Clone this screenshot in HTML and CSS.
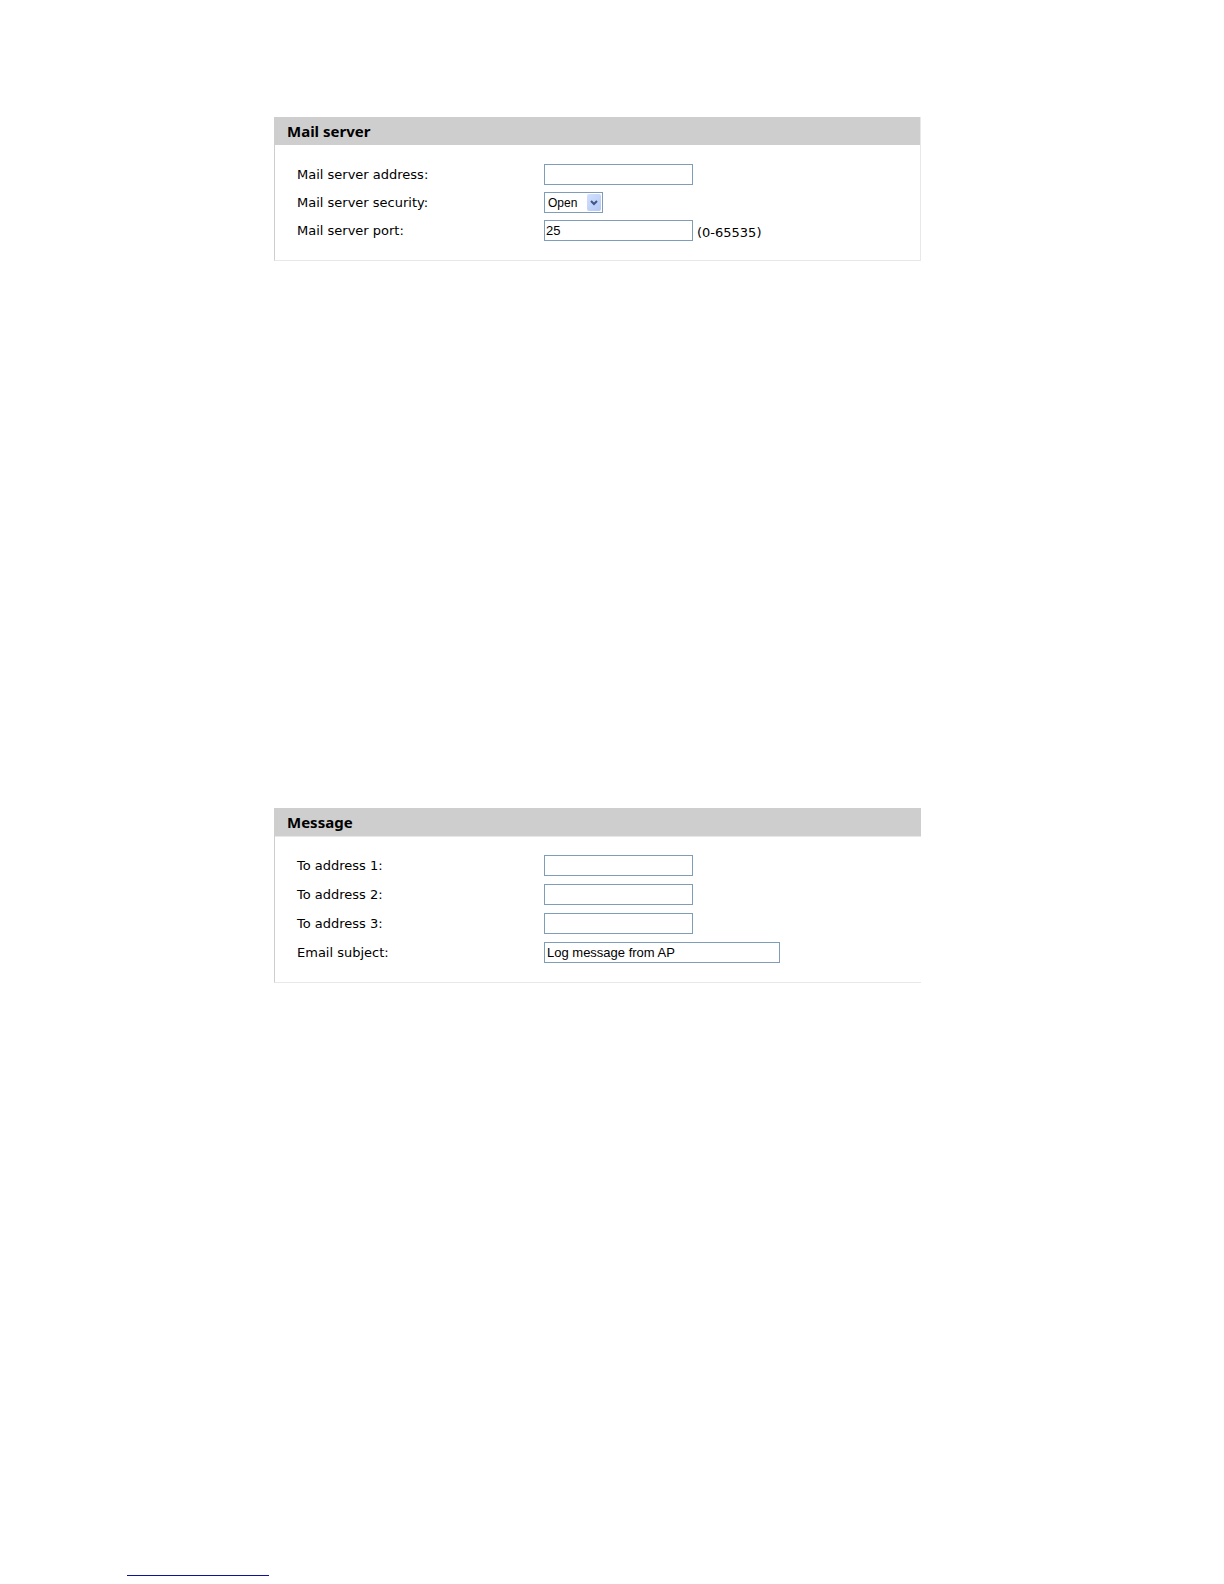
FILE: index.html
```html
<!DOCTYPE html>
<html lang="en">
<head>
<meta charset="utf-8">
<title>Mail server</title>
<link rel="stylesheet" href="styles.css">
</head>
<body>
<form class="page">
  <section class="panel panel-server">
    <h2 class="panel-title">Mail server</h2>
    <div class="fields">
      <label for="address">Mail server address:</label>
      <div class="control"><input type="text" id="address"></div>
      <label for="security">Mail server security:</label>
      <div class="control">
        <div class="select-box">
          <select id="security"><option>Open</option></select>
          <span class="select-arrow"><svg width="8" height="6" viewBox="0 0 8 6"><path d="M1 1l3 3 3-3" fill="none" stroke="#3f5686" stroke-width="2"/></svg></span>
        </div>
      </div>
      <label for="port">Mail server port:</label>
      <div class="control"><input type="text" id="port" value="25"><span class="hint">(0-65535)</span></div>
    </div>
  </section>
  <section class="panel panel-message">
    <h2 class="panel-title">Message</h2>
    <div class="fields">
      <label for="to1">To address 1:</label>
      <div class="control"><input type="text" id="to1"></div>
      <label for="to2">To address 2:</label>
      <div class="control"><input type="text" id="to2"></div>
      <label for="to3">To address 3:</label>
      <div class="control"><input type="text" id="to3"></div>
      <label for="subject">Email subject:</label>
      <div class="control"><input type="text" id="subject" class="wide" value="Log message from AP"></div>
    </div>
  </section>
</form>
<hr class="foot-rule">
</body>
</html>
```
FILE: styles.css
```css
* {
  box-sizing: border-box;
}

body {
  margin: 0;
  padding-bottom: 8px;
  background: #fff;
  color: #000;
  font: 13px/21px "DejaVu Sans", Verdana, sans-serif;
}

.page {
  display: flex;
  flex-direction: column;
  gap: 547px;
  padding: 117px 303px 0 274px;
}

.panel {
  border: solid #e8e8e8;
  border-width: 0 0 1px;
  border-left: 1px solid #cecece;
}

.panel-server {
  border-right: 1px solid #e8e8e8;
}

.panel-title {
  margin: 0;
  padding: 0 12px;
  background: #cecece;
  font: bold 15px/28px "Noto Sans", Verdana, sans-serif;
}

.panel-message .panel-title {
  border-bottom: 1px solid #e8e8e8;
}

.fields {
  display: grid;
  grid-template-columns: 247px 1fr;
  row-gap: 7px;
  padding: 19px 0 19px 22px;
}

.panel-message .fields {
  row-gap: 8px;
  padding-top: 18px;
}

.control {
  display: flex;
  gap: 4px;
  height: 21px;
}

input,
select {
  width: 149px;
  height: 21px;
  margin: 0;
  padding: 0 1px;
  border: 1px solid #7f9db9;
  border-radius: 0;
  background: #fff;
  color: #000;
  font: 13px "Liberation Sans", Arial, sans-serif;
}

.wide {
  width: 236px;
  padding: 0 2px;
}

.hint {
  padding-top: 2px;
}

.select-box {
  position: relative;
  width: 59px;
}

select {
  display: block;
  width: 100%;
  padding: 0 3px;
  font-size: 12px;
  appearance: none;
}

.select-arrow {
  position: absolute;
  top: 2px;
  right: 2px;
  display: flex;
  align-items: center;
  justify-content: center;
  width: 14px;
  height: 17px;
  border-radius: 2px;
  background: linear-gradient(135deg, #d3e0fc, #b4c8f6);
  pointer-events: none;
}

.foot-rule {
  width: 142px;
  height: 1px;
  margin: 592px 0 0 127px;
  border: 0;
  background: #10109a;
}
```
